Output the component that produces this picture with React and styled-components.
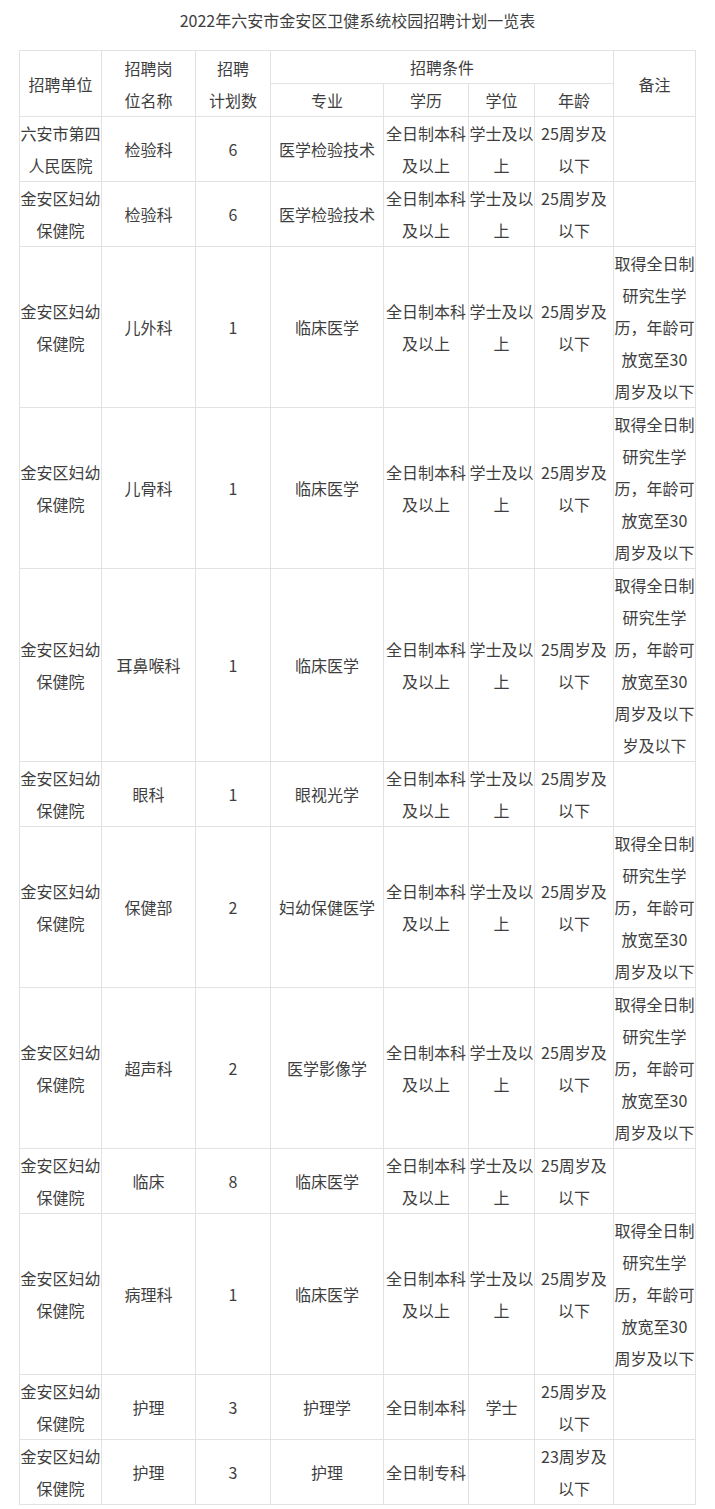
import React from 'react'
import styled, { createGlobalStyle } from 'styled-components'

const GlobalStyle = createGlobalStyle`
    html, body {
        margin: 0;
        padding: 0;
        background: #fff;
    }
    body {
        font-family: "Noto Sans CJK SC", "Microsoft YaHei", sans-serif;
        color: #3e3e3e;
    }
`

let Page = styled.div`
    width: 715px;
    padding-top: 4px;
    display: flex;
    flex-direction: column;
    align-items: center;
`

let Title = styled.h1`
    margin: 0 0 14px 0;
    font-size: 16px;
    font-weight: normal;
    line-height: 32px;
    color: #3e3e3e;
`

let Table = styled.table`
    width: 677px;
    border-collapse: collapse;
    table-layout: fixed;
    font-size: 16px;
    line-height: 32px;
`

let Col = styled.col`
    width: ${p => p.$w}px;
`

let Cell = styled.td`
    border: 1px solid #e2e2e2;
    padding: 0;
    text-align: center;
    vertical-align: middle;
`

let HeadCell = styled.th`
    border: 1px solid #e2e2e2;
    padding: 0;
    font-weight: normal;
    text-align: center;
    vertical-align: middle;
`

const widths = [82, 94, 75, 113, 85, 66, 79, 82]

const note = '取得全日制研究生学历，年龄可放宽至30周岁及以下'

const rows = [
    ['六安市第四人民医院', '检验科', '6', '医学检验技术', '全日制本科及以上', '学士及以上', '25周岁及以下', ''],
    ['金安区妇幼保健院', '检验科', '6', '医学检验技术', '全日制本科及以上', '学士及以上', '25周岁及以下', ''],
    ['金安区妇幼保健院', '儿外科', '1', '临床医学', '全日制本科及以上', '学士及以上', '25周岁及以下', note],
    ['金安区妇幼保健院', '儿骨科', '1', '临床医学', '全日制本科及以上', '学士及以上', '25周岁及以下', note],
    ['金安区妇幼保健院', '耳鼻喉科', '1', '临床医学', '全日制本科及以上', '学士及以上', '25周岁及以下', note + '岁及以下'],
    ['金安区妇幼保健院', '眼科', '1', '眼视光学', '全日制本科及以上', '学士及以上', '25周岁及以下', ''],
    ['金安区妇幼保健院', '保健部', '2', '妇幼保健医学', '全日制本科及以上', '学士及以上', '25周岁及以下', note],
    ['金安区妇幼保健院', '超声科', '2', '医学影像学', '全日制本科及以上', '学士及以上', '25周岁及以下', note],
    ['金安区妇幼保健院', '临床', '8', '临床医学', '全日制本科及以上', '学士及以上', '25周岁及以下', ''],
    ['金安区妇幼保健院', '病理科', '1', '临床医学', '全日制本科及以上', '学士及以上', '25周岁及以下', note],
    ['金安区妇幼保健院', '护理', '3', '护理学', '全日制本科', '学士', '25周岁及以下', ''],
    ['金安区妇幼保健院', '护理', '3', '护理', '全日制专科', '', '23周岁及以下', ''],
]

const App = () => {
    return (
        <Page>
            <GlobalStyle />
            <Title>2022年六安市金安区卫健系统校园招聘计划一览表</Title>
            <Table>
                <colgroup>
                    {widths.map((w, i) => <Col key={i} $w={w} />)}
                </colgroup>
                <thead>
                    <tr>
                        <HeadCell rowSpan={2}>招聘单位</HeadCell>
                        <HeadCell rowSpan={2}>招聘岗<br />位名称</HeadCell>
                        <HeadCell rowSpan={2}>招聘<br />计划数</HeadCell>
                        <HeadCell colSpan={4}>招聘条件</HeadCell>
                        <HeadCell rowSpan={2}>备注</HeadCell>
                    </tr>
                    <tr>
                        <HeadCell>专业</HeadCell>
                        <HeadCell>学历</HeadCell>
                        <HeadCell>学位</HeadCell>
                        <HeadCell>年龄</HeadCell>
                    </tr>
                </thead>
                <tbody>
                    {rows.map((r, i) => (
                        <tr key={i}>
                            {r.map((c, j) => <Cell key={j}>{c}</Cell>)}
                        </tr>
                    ))}
                </tbody>
            </Table>
        </Page>
    )
}

export default App
